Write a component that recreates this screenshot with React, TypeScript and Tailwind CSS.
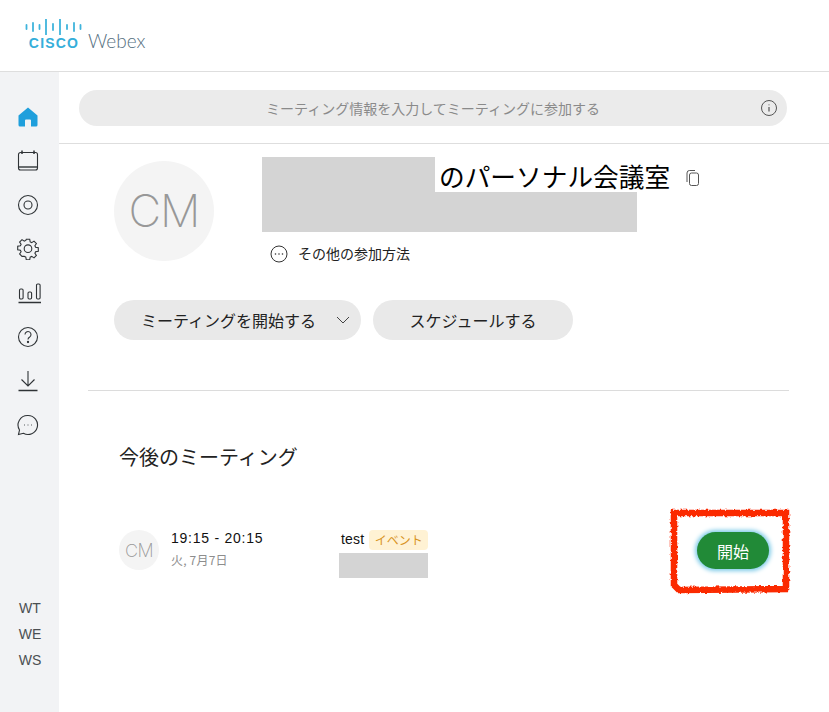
import React from 'react';

const font = { fontFamily: '"Noto Sans CJK JP", "Liberation Sans", sans-serif' };
const latin = { fontFamily: '"Liberation Sans", "Noto Sans CJK JP", sans-serif' };

const bars = [
  [1.5, 6, 10], [8, 4, 12], [14.5, 6, 10], [21, 0.5, 15.5], [28, 5, 11], [35, 0.5, 15.5], [42, 6, 10], [49, 4, 12], [55.5, 6, 10],
];

const CiscoBars = () => (
  <svg width="58" height="16" viewBox="0 0 58 16" className="block">
    {bars.map(([x, a, b]) => (
      <line key={x} x1={x} x2={x} y1={a} y2={b} stroke="#3fb4dc" strokeWidth="1.8" strokeLinecap="round" />
    ))}
  </svg>
);

const Home = () => (
  <svg width="22" height="22" viewBox="0 0 22 22">
    <path d="M11 1.5 1.5 9.5V19a1.5 1.5 0 0 0 1.5 1.5h5V14.5a1 1 0 0 1 1-1h4a1 1 0 0 1 1 1v6h5a1.500 1.500 0 0 0 1.500-1.500V9.500Z" fill="#1f9fdc" />
  </svg>
);

const stroke = { fill: 'none', stroke: '#2f3336', strokeWidth: 1.1 };

const navIcons = [
  <svg key="cal" width="22" height="22" viewBox="0 0 22 22" {...stroke}>
    <path d="M5 .5v3.500M17 .5v3.500" strokeWidth="1.500" />
    <path d="M3.500 2.500h15a2 2 0 0 1 2 2V18a2 2 0 0 1-2 2h-15a2 2 0 0 1-2-2V4.500a2 2 0 0 1 2-2Z" />
    <path d="M1.500 17h19" strokeWidth="1.400" />
  </svg>,
  <svg key="rec" width="22" height="22" viewBox="0 0 22 22" {...stroke}>
    <circle cx="11" cy="11" r="9.500" />
    <circle cx="11" cy="11" r="4" />
  </svg>,
  <svg key="gear" width="22" height="22" viewBox="0 0 22 22" {...stroke}>
    <path d="M9.300 1.500h3.400l.5 2.700 1.500.7 2.300-1.500 2.400 2.400-1.500 2.300.7 1.500 2.700.5v3.400l-2.700.5-.7 1.500 1.500 2.300-2.400 2.400-2.300-1.500-1.500.7-.5 2.700H9.300l-.5-2.700-1.500-.7L5 18.700l-2.400-2.400L4.100 14l-.7-1.500-2.700-.5V8.600l2.700-.5.7-1.500L2.600 4.300 5 1.900l2.300 1.500 1.500-.7Z" transform="translate(0 -.3)" />
    <circle cx="11" cy="10.700" r="3.800" />
  </svg>,
  <svg key="chart" width="24" height="22" viewBox="0 0 24 22" className="ml-[3px]" {...stroke}>
    <rect x="1.500" y="7" width="3.600" height="10" rx="1.200" />
    <rect x="10" y="10" width="3.600" height="7" rx="1.200" />
    <rect x="18.500" y="2" width="3.600" height="15" rx="1.200" />
    <path d="M.500 20.500h22.500" strokeWidth="1.500" />
  </svg>,
  <svg key="help" width="22" height="22" viewBox="0 0 22 22" {...stroke}>
    <circle cx="11" cy="11" r="9.500" />
    <path d="M8 8.500a3 3 0 1 1 4.700 2.500c-1.100.7-1.700 1.300-1.700 2.500" />
    <circle cx="11" cy="16" r=".6" fill="#2f3336" />
  </svg>,
  <svg key="dl" width="22" height="22" viewBox="0 0 22 22" {...stroke}>
    <path d="M11 1v14.500M4.500 9.500l6.500 6.500 6.500-6.500" />
    <path d="M1.500 20.500h19" strokeWidth="1.500" />
  </svg>,
  <svg key="chat" width="22" height="22" viewBox="0 0 22 22" {...stroke}>
    <path d="M11 1.500a9.500 9.500 0 1 1-4.600 17.800L1.500 20.500l1-4.500A9.500 9.500 0 0 1 11 1.500Z" />
    <path d="M7.500 11h.01M11 11h.01M14.500 11h.01" strokeWidth="1" strokeLinecap="round" />
  </svg>,
];

const Sidebar = () => (
  <aside className="w-[59px] h-full shrink-0 bg-[#f2f3f5] flex flex-col items-center pt-[34px] pb-[43px]">
    <div className="flex flex-col items-center gap-[22px] pr-[3px]">
      <Home />
      {navIcons}
    </div>
    <div className="mt-auto flex flex-col items-center gap-[8px] text-[14px] leading-[18px] text-[#4b4f52] pl-[1px]" style={latin}>
      <span>WT</span>
      <span>WE</span>
      <span>WS</span>
    </div>
  </aside>
);

const Avatar = ({ big }: { big?: boolean }) => (
  <div
    className={
      big
        ? 'w-[100px] h-[100px] rounded-full bg-[#f4f4f4] flex items-center justify-center text-[45px] font-extralight text-[#989898] shrink-0 tracking-[-1px]'
        : 'w-[40px] h-[40px] rounded-full bg-[#f4f4f4] flex items-center justify-center text-[18px] font-extralight text-[#989898] shrink-0 tracking-[-0.5px]'
    }
    style={{ fontFamily: 'Inter, sans-serif' }}
  >
    CM
  </div>
);

export default function App() {
  return (
    <div className="w-[829px] h-[712px] overflow-hidden bg-white flex flex-col relative text-black" style={font}>
      <header className="h-[72px] shrink-0 border-b border-[#dedede] pl-[25px] pt-[19px]">
        <div className="flex items-end gap-[5px]">
          <div className="flex flex-col items-center w-[58px]">
            <CiscoBars />
            <span className="text-[#35aeda] font-bold text-[14px] leading-[13px] tracking-[1.2px] mt-[2px]" style={latin}>
              CISCO
            </span>
          </div>
          <span className="text-[#56707f] text-[19px] leading-[20px] font-light -mb-[1px]" style={{ fontFamily: 'Lato, sans-serif' }}>
            Webex
          </span>
        </div>
      </header>

      <div className="flex-1 flex min-h-0">
        <Sidebar />
        <main className="flex-1 min-w-0 flex flex-col">
          <div className="h-[72px] shrink-0 border-b border-[#dedede] pt-[18px] pl-[20px]">
            <div className="w-[708px] h-[36px] rounded-full bg-[#ebebeb] flex items-center justify-center relative text-[14px] text-[#8a8a8a]">
              ミーティング情報を入力してミーティングに参加する
              <svg width="18" height="18" viewBox="0 0 18 18" fill="none" stroke="#555" className="absolute right-[9px] top-[9px]">
                <circle cx="9" cy="9" r="7.500" />
                <path d="M9 8v4.500M9 5.500v.8" strokeWidth="1.200" />
              </svg>
            </div>
          </div>

          <section className="pl-[55px] pt-[13px] flex gap-[48px]">
            <div className="pt-[4px]">
              <Avatar big />
            </div>
            <div className="flex flex-col">
              <div className="flex h-[35px]">
                <div className="w-[173px] h-[35px] bg-[#d4d4d4]" />
                <span className="ml-[4px] text-[25.700px] leading-[38px] whitespace-nowrap">のパーソナル会議室</span>
                <svg width="16" height="18" viewBox="0 0 16 18" fill="none" stroke="#555" strokeWidth="1" className="ml-[15px] mt-[12px]">
                  <rect x="4.500" y="4" width="9" height="12.500" rx="2" />
                  <path d="M2 13V4a2.500 2.500 0 0 1 2.500-2.500H10" />
                </svg>
              </div>
              <div className="w-[375px] h-[40px] bg-[#d4d4d4]" />
              <div className="flex items-center gap-[10px] pl-[8px] mt-[10px] text-[14px] leading-[22px] text-[#222]">
                <svg width="18" height="18" viewBox="0 0 18 18" fill="none" stroke="#333" className="mt-[2px]">
                  <circle cx="9" cy="9" r="8" />
                  <path d="M5.500 9h.01M9 9h.01M12.500 9h.01" strokeWidth="1.600" strokeLinecap="round" />
                </svg>
                その他の参加方法
              </div>
            </div>
          </section>

          <div className="pl-[55px] mt-[36px] flex gap-[12px] text-[16px] text-[#222]">
            <button className="w-[247px] h-[40px] rounded-full bg-[#e9e9e9] flex items-center pl-[27px]">
              ミーティングを開始する
              <svg width="14" height="8" viewBox="0 0 14 8" fill="none" stroke="#444" className="ml-[20px]">
                <path d="M1 1l6 6 6-6" />
              </svg>
            </button>
            <button className="w-[200px] h-[40px] rounded-full bg-[#e9e9e9]">スケジュールする</button>
          </div>

          <div className="ml-[29px] w-[701px] mt-[50px] border-t border-[#dcdcdc]" />

          <h2 className="pl-[60px] mt-[50px] text-[20px] leading-[32px] font-normal text-[#222]">今後のミーティング</h2>

          <div className="pl-[60px] mt-[57px] flex items-start relative">
            <Avatar />
            <div className="ml-[12px] w-[168px]">
              <div className="text-[14px] leading-[16px] text-[#111] tracking-[0.75px]" style={latin}>19:15 - 20:15</div>
              <div className="text-[12px] leading-[16px] mt-[6px] text-[#8d8d8d] tracking-[0.2px]">火, 7月7日</div>
            </div>
            <div className="flex flex-col items-start">
              <div className="flex items-center h-[20px] pl-[2px]">
                <span className="text-[14px] leading-[16px] text-[#111] tracking-[0.2px] -mt-[2px]" style={latin}>test</span>
                <span className="ml-[5px] w-[59px] h-[20px] rounded-[4px] bg-[#fff2d4] text-[#d9941f] text-[12px] leading-[20px] text-center">イベント</span>
              </div>
              <div className="mt-[3px] w-[89px] h-[25px] bg-[#d4d4d4]" />
            </div>
            <button className="absolute left-[638px] top-[2px] w-[72px] h-[37px] rounded-full bg-[#218a37] text-white text-[16px] shadow-[0_0_4px_2px_#7fcbe8]">
              開始
            </button>
          </div>
        </main>
      </div>

      {/* red marker annotation */}
      <svg className="absolute left-[665px] top-[505px]" width="130" height="95" viewBox="0 0 130 95" fill="none">
        <defs>
          <filter id="rough" x="-10%" y="-10%" width="120%" height="120%">
            <feTurbulence type="fractalNoise" baseFrequency="0.35" numOctaves="2" seed="4" />
            <feDisplacementMap in="SourceGraphic" scale="4" />
          </filter>
        </defs>
        <path d="M9 8 L121 8 L121 84 L14 85 L9 80 Z" stroke="#fb2a06" strokeWidth="6.500" filter="url(#rough)" />
      </svg>
    </div>
  );
}
